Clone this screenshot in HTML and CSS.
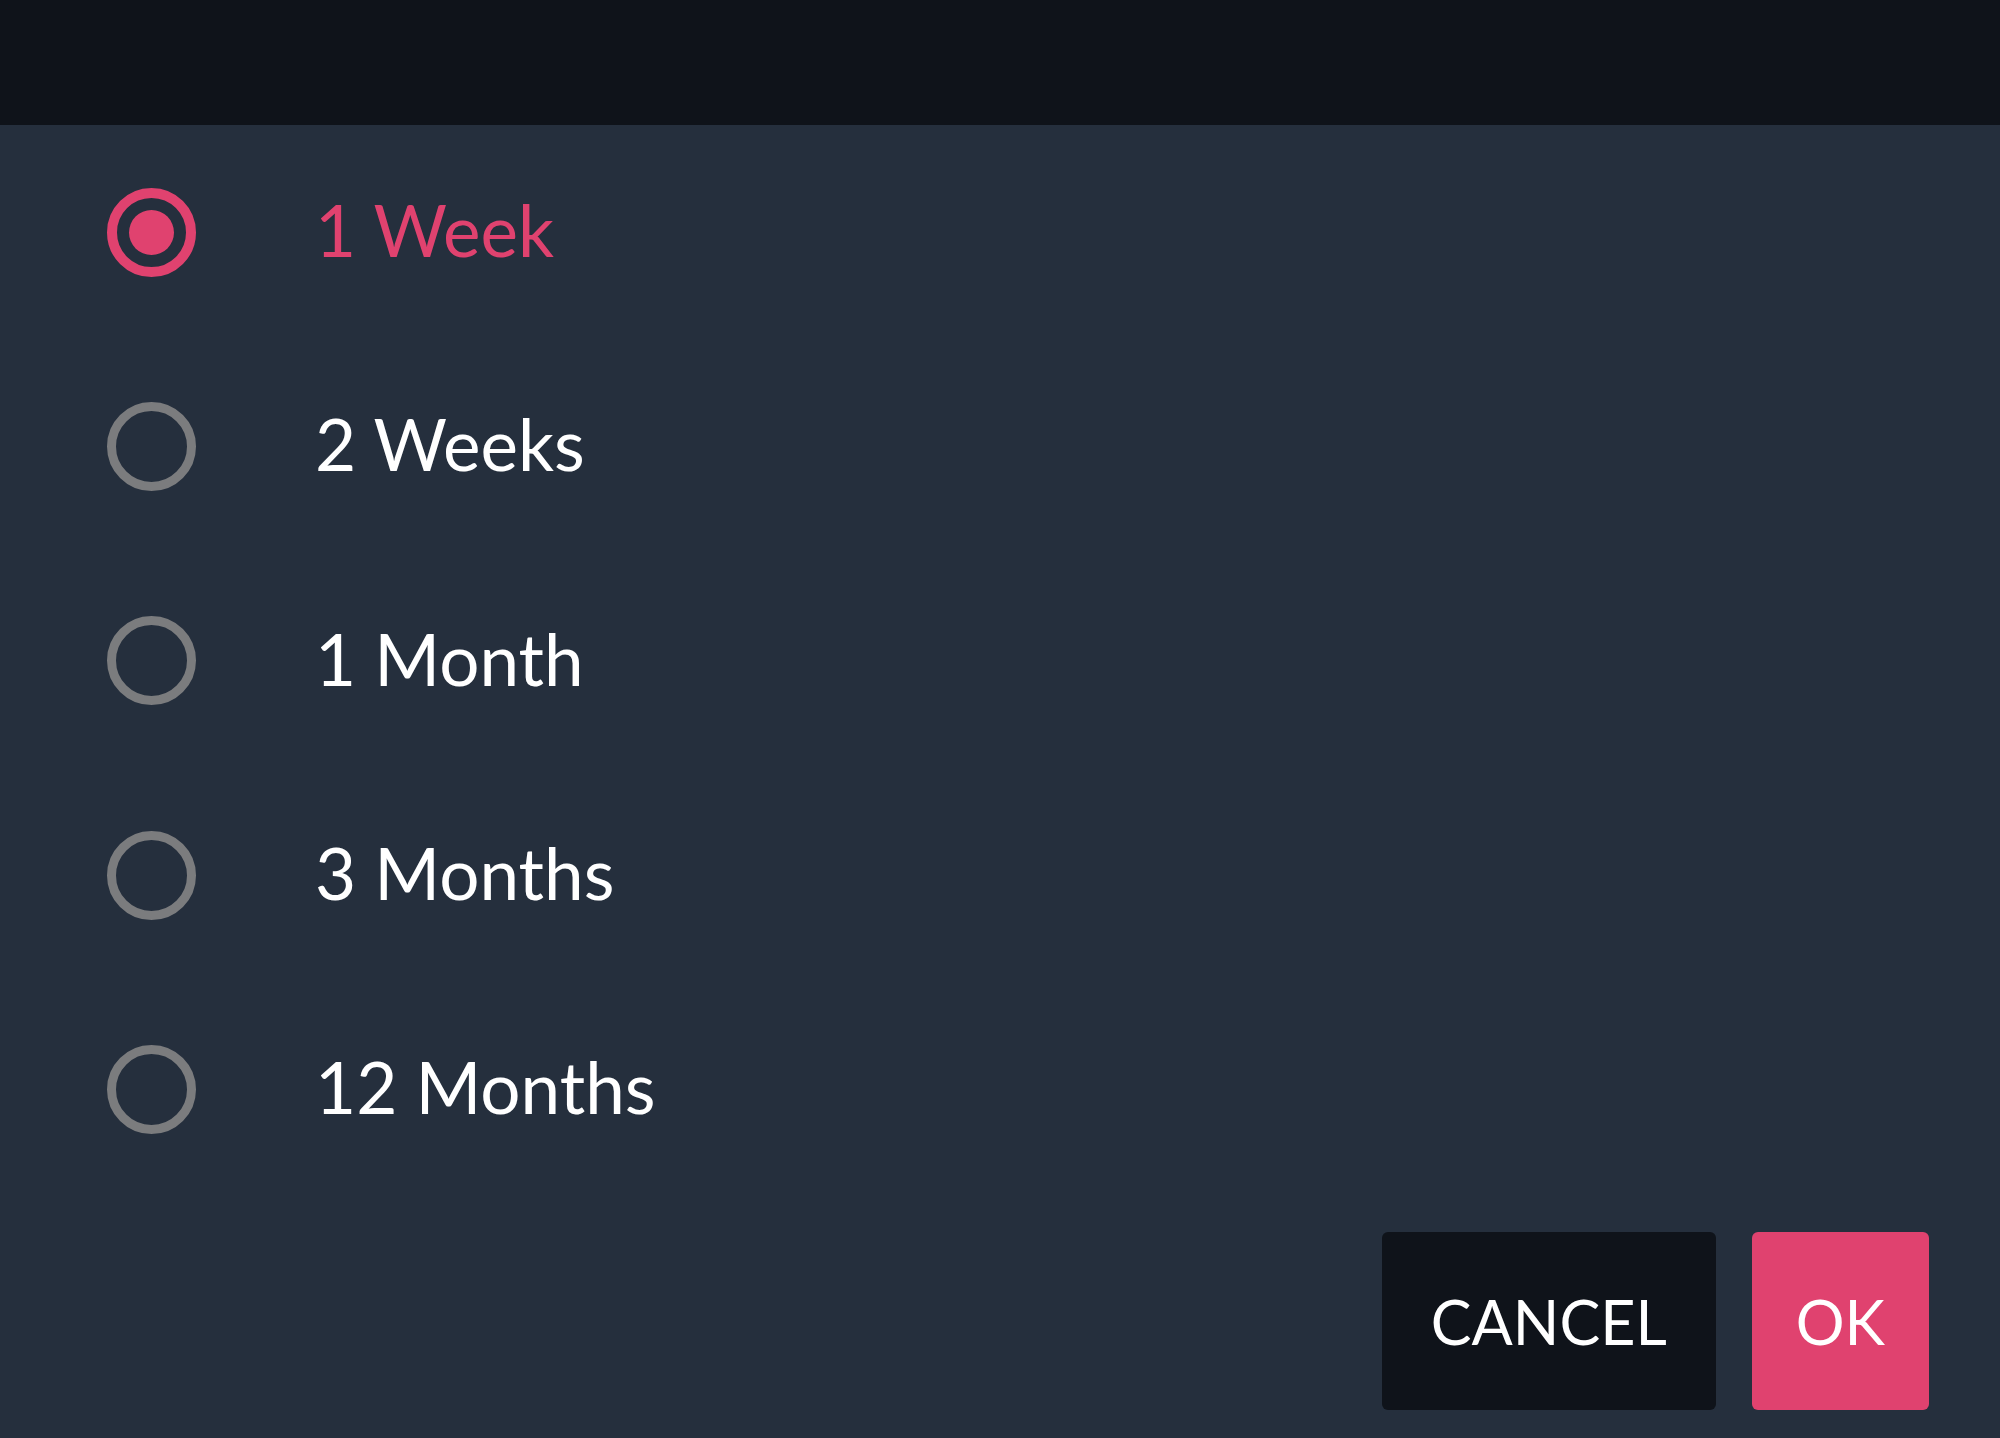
FILE: index.html
```html
<!DOCTYPE html>
<html>
<head>
<meta charset="utf-8">
<link rel="stylesheet" href="styles.css">
</head>
<body>
<div class="topbar"></div>
<div class="dialog">
  <ul class="options">
    <li class="option selected"><span class="radio"><span class="dot"></span></span><span class="label">1 Week</span></li>
    <li class="option"><span class="radio"></span><span class="label">2 Weeks</span></li>
    <li class="option"><span class="radio"></span><span class="label">1 Month</span></li>
    <li class="option"><span class="radio"></span><span class="label">3 Months</span></li>
    <li class="option"><span class="radio"></span><span class="label">12 Months</span></li>
  </ul>
  <div class="actions">
    <button class="btn cancel">CANCEL</button>
    <button class="btn ok">OK</button>
  </div>
</div>
</body>
</html>
```
FILE: styles.css
```css
html, body {
  margin: 0;
  padding: 0;
  background: #252f3d;
  height: 1438px;
  overflow: hidden;
  font-family: "Lato", "Noto Sans", sans-serif;
}
.topbar {
  height: 125px;
  background: #0f131a;
}
.options {
  list-style: none;
  margin: 0;
  padding: 0;
}
.option {
  height: 214.3px;
  display: flex;
  align-items: center;
  padding-left: 107px;
  gap: 119px;
}
.radio {
  box-sizing: border-box;
  width: 89px;
  height: 89px;
  border-radius: 50%;
  border: 9px solid #7b7c7e;
  display: flex;
  align-items: center;
  justify-content: center;
  flex: none;
}
.selected .radio {
  border: 10px solid #e0426f;
}
.dot {
  width: 45px;
  height: 45px;
  border-radius: 50%;
  background: #e0426f;
}
.label {
  font-size: 71px;
  color: #ffffff;
  line-height: 1;
  padding-bottom: 5px;
}
.selected .label {
  color: #e0426f;
}
.actions {
  display: flex;
  justify-content: flex-end;
  gap: 36px;
  padding-right: 71px;
  margin-top: 36px;
}
.btn {
  height: 178px;
  padding: 0 49px;
  border: none;
  border-radius: 6px;
  font-family: "Lato", "Noto Sans", sans-serif;
  font-size: 61px;
  color: #ffffff;
}
.cancel {
  background: #0f131a;
}
.ok {
  background: #e0426f;
  padding: 0 44px;
}
```
